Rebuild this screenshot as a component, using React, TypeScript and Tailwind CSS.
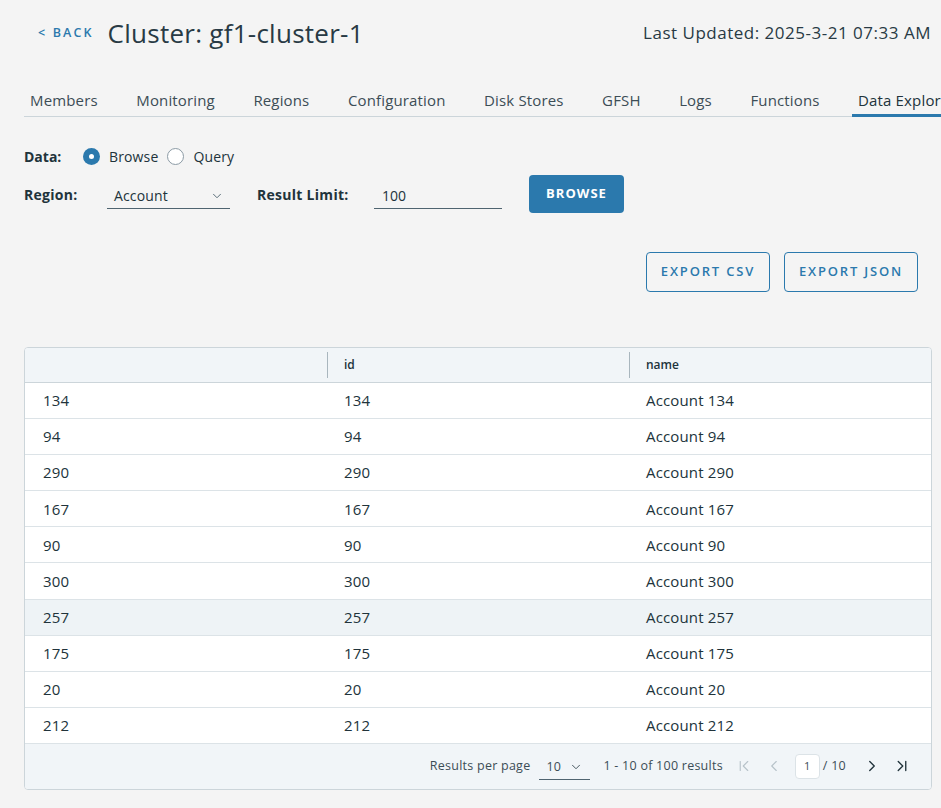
import { ChevronDown, ChevronFirst, ChevronLast, ChevronLeft, ChevronRight } from "lucide-react";

const tabs = ["Members", "Monitoring", "Regions", "Configuration", "Disk Stores", "GFSH", "Logs", "Functions", "Data Explorer"];
const rows = [134, 94, 290, 167, 90, 300, 257, 175, 20, 212];

const Radio = ({ checked, label }: { checked?: boolean; label: string }) => (
    <label className="flex items-center gap-[9px]">
        {checked ? (
            <span className="w-[17px] h-[17px] rounded-full bg-[#2b79ad] flex items-center justify-center">
                <span className="w-[5px] h-[5px] rounded-full bg-white" />
            </span>
        ) : (
            <span className="w-[17px] h-[17px] rounded-full border border-[#8c9ba5] bg-white" />
        )}
        <span className="text-[14px] tracking-[0.01em]">{label}</span>
    </label>
);

export default function App() {
    return (
        <div className="min-h-screen w-full overflow-hidden bg-[#f4f4f4] font-['Open_Sans',sans-serif] text-[#21333b]">
            <div className="flex h-[66px] items-center pl-[38px] pr-[10px]">
                <span className="text-[12.5px] font-semibold tracking-[0.17em] text-[#2b79ad]">&lt; BACK</span>
                <h1 className="ml-[14px] text-[26px] font-medium tracking-[0.01em] text-[#283a44]">Cluster: gf1-cluster-1</h1>
                <span className="ml-auto text-[17px] tracking-[0.03em] text-[#283a44]">Last Updated: 2025-3-21 07:33 AM</span>
            </div>

            {/* tab strip runs past the window edge, like the original */}
            <div className="ml-[24px] mt-[16px] flex gap-[26.5px] whitespace-nowrap border-b border-[#ccd5da]">
                {tabs.map((t) => (
                    <div
                        key={t}
                        className={
                            "px-[6px] pt-[8px] pb-[4px] text-[15px] tracking-[0.01em] leading-[20px] -mb-px border-b-[3px] " +
                            (t === "Data Explorer" ? "border-[#2b79ad] text-[#21333b]" : "border-transparent text-[#3c4d56]")
                        }
                    >
                        {t}
                    </div>
                ))}
            </div>

            <div className="pl-[24px] mt-[27px] flex h-[24px] items-center">
                <span className="text-[14px] font-bold w-[59px]">Data:</span>
                <div className="flex items-center gap-[9px]">
                    <Radio checked label="Browse" />
                    <Radio label="Query" />
                </div>
            </div>

            <div className="pl-[24px] mt-[7px] flex h-[38px] items-center">
                <span className="text-[14px] font-bold tracking-[0.02em] w-[83px]">Region:</span>
                <div className="flex w-[123px] items-center justify-between border-b border-[#4f6470] pl-[7px] pr-[6px] pt-[6px] pb-[2px] text-[14px]">
                    <span className="tracking-[0.01em]">Account</span>
                    <ChevronDown size={14} strokeWidth={1.6} className="text-[#4f6470]" />
                </div>
                <span className="ml-[27px] text-[14px] font-bold tracking-[0.02em] w-[117px]">Result Limit:</span>
                <div className="w-[128px] border-b border-[#4f6470] pl-[8px] pt-[6px] pb-[2px] text-[14px]">100</div>
                <button className="ml-[27px] h-[38px] w-[95px] rounded-[4px] bg-[#2b79ad] text-[13px] font-bold tracking-[0.08em] text-white">
                    BROWSE
                </button>
            </div>

            <div className="mt-[39px] flex justify-end gap-[14px] pr-[23px]">
                <button className="h-[40px] w-[124px] rounded-[4px] border border-[#2b79ad] text-[13px] font-semibold tracking-[0.14em] text-[#2b79ad]">
                    EXPORT CSV
                </button>
                <button className="h-[40px] w-[134px] rounded-[4px] border border-[#2b79ad] text-[13px] font-semibold tracking-[0.14em] text-[#2b79ad]">
                    EXPORT JSON
                </button>
            </div>

            <div className="ml-[24px] mr-[9px] mt-[55px] overflow-hidden rounded-[4px] border border-[#ccd5da] bg-white">
                <div className="grid h-[35px] grid-cols-3 items-center border-b border-[#ccd5da] bg-[#f1f5f8] text-[12px] font-semibold">
                    <div />
                    <div className="flex h-full items-center">
                        <span className="h-[26px] w-px bg-[#a9b6be]" />
                        <span className="ml-[16px]">id</span>
                    </div>
                    <div className="flex h-full items-center">
                        <span className="h-[26px] w-px bg-[#a9b6be]" />
                        <span className="ml-[16px]">name</span>
                    </div>
                </div>
                {rows.map((r) => (
                    <div
                        key={r}
                        className={
                            "grid h-[36.1px] grid-cols-3 items-center border-b border-[#dce3e7] text-[15px] tracking-[0.01em] " +
                            (r === 257 ? "bg-[#eef3f6]" : "bg-white")
                        }
                    >
                        <span className="pl-[18px]">{r}</span>
                        <span className="pl-[17px]">{r}</span>
                        <span className="pl-[17px]">Account {r}</span>
                    </div>
                ))}
                <div className="flex h-[45px] items-center justify-end bg-[#f1f5f8] pr-[20px] text-[12.5px] tracking-[0.02em] text-[#3c4d56]">
                    <span>Results per page</span>
                    <div className="ml-[9px] flex w-[51px] items-center gap-[8px] border-b border-[#4f6470] pl-[7px] pt-[5px] pb-[3px]">
                        <span>10</span>
                        <ChevronDown size={14} strokeWidth={1.6} />
                    </div>
                    <span className="ml-[13px]">1 - 10 of 100 results</span>
                    <ChevronFirst size={18} strokeWidth={1.5} className="ml-[12px] text-[#b7c2c9]" />
                    <ChevronLeft size={18} strokeWidth={1.5} className="ml-[12px] text-[#b7c2c9]" />
                    <div className="ml-[12px] flex h-[25px] w-[25px] items-center justify-center rounded-[4px] border border-[#dce3e7] bg-white text-[11px]">1</div>
                    <span className="ml-[3px]">/ 10</span>
                    <ChevronRight size={18} strokeWidth={1.8} className="ml-[17px] text-[#21333b]" />
                    <ChevronLast size={18} strokeWidth={1.8} className="ml-[12px] text-[#21333b]" />
                </div>
            </div>
        </div>
    );
}
